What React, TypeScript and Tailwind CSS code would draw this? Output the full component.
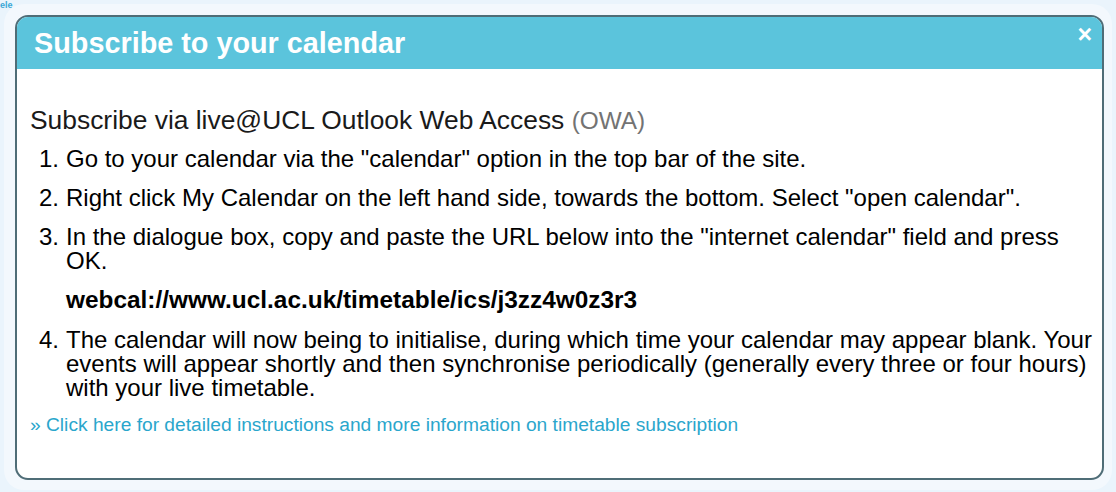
import React from 'react';

const steps: React.ReactNode[] = [
  'Go to your calendar via the "calendar" option in the top bar of the site.',
  'Right click My Calendar on the left hand side, towards the bottom. Select "open calendar".',
  <>
    In the dialogue box, copy and paste the URL below into the "internet calendar" field and press OK.
    <div className="mt-[15px] mb-[1px] font-bold text-[24.4px] leading-[24px]">webcal://www.ucl.ac.uk/timetable/ics/j3zz4w0z3r3</div>
  </>,
  'The calendar will now being to initialise, during which time your calendar may appear blank. Your events will appear shortly and then synchronise periodically (generally every three or four hours) with your live timetable.',
];

export default function App() {
  return (
    <div
      className="w-[1116px] h-[492px] bg-[#eaf4fc] overflow-hidden relative"
      style={{ fontFamily: '"Liberation Sans", Arial, sans-serif' }}
    >
      <span className="absolute left-0 top-0 text-[9px] leading-[10px] font-bold text-[#3aa7d6]">ele</span>
      <div className="absolute left-[4px] top-[4px] right-[4px] bottom-[2px] rounded-[20px] bg-[#f3f8fd]" />
      <div className="relative mt-[15px] ml-[15px] w-[1089px] h-[465px] border-2 border-[#4f6d77] rounded-[13px] bg-white overflow-hidden">
        <div className="h-[52px] bg-[#5bc4dc] flex items-center justify-between pl-[17px] pr-[10px]">
          <h2 className="text-white font-bold text-[28.8px] leading-none pt-[1px]">Subscribe to your calendar</h2>
          <span className="text-white font-bold text-[25px] leading-none -mt-[17px]">×</span>
        </div>
        <div className="pl-[13px] pr-[4px] pt-[37px] text-black">
          <p className="text-[26.4px] leading-[28px] text-[#1a1a1a]">
            Subscribe via live@UCL Outlook Web Access <span className="text-[#737373] text-[24.4px]">(OWA)</span>
          </p>
          <ol className="mt-[12px] flex flex-col gap-[15px] text-[24px] leading-[24px]">
            {steps.map((s, i) => (
              <li key={i} className="flex">
                <span className="w-[36px] shrink-0 text-right pr-[7px]">{i + 1}.</span>
                <div className="flex-1">{s}</div>
              </li>
            ))}
          </ol>
          <a className="block mt-[14px] text-[19.2px] leading-[22px] text-[#2aa6cc]">
            » Click here for detailed instructions and more information on timetable subscription
          </a>
        </div>
      </div>
    </div>
  );
}
